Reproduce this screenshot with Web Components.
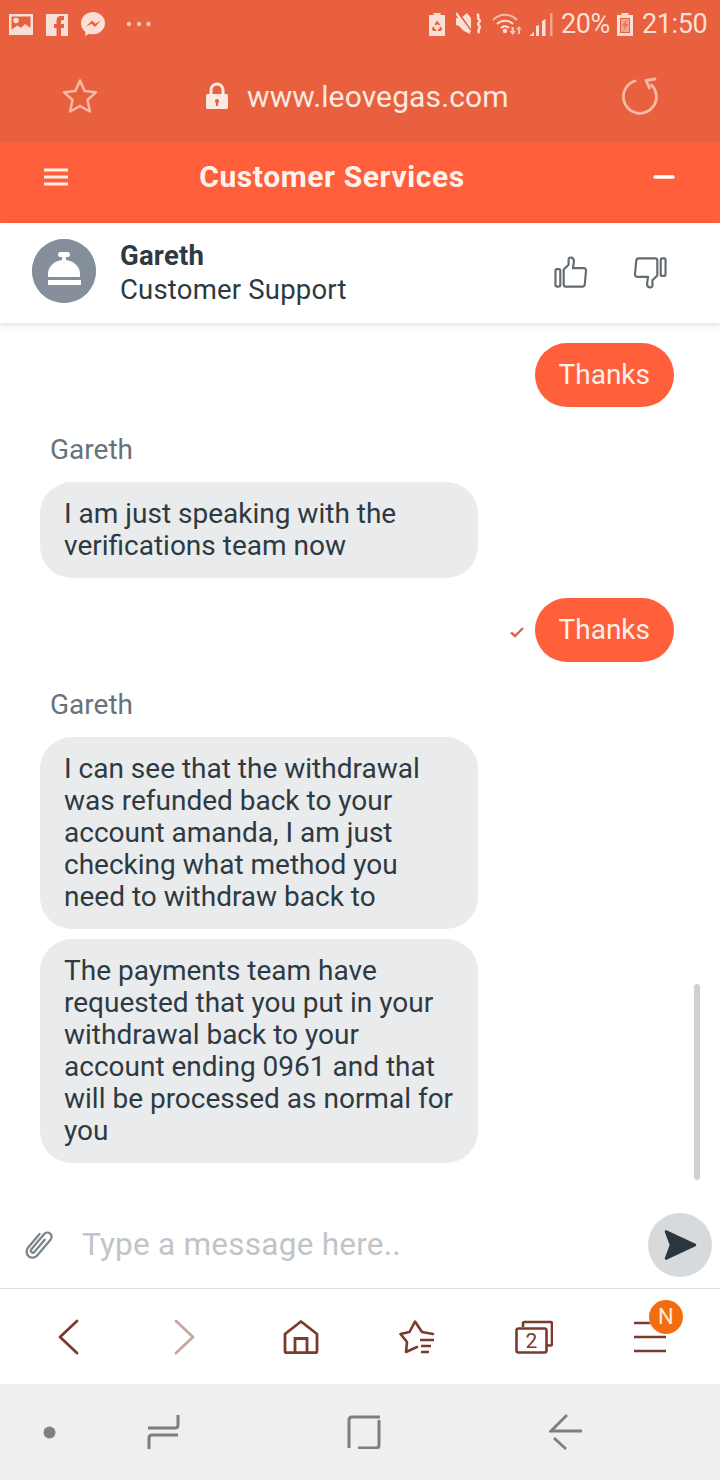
<!DOCTYPE html>
<html><head><meta charset="utf-8">
<style>
html,body{margin:0;padding:0;background:#fff}
body{width:720px;height:1480px;overflow:hidden;font-family:Roboto,sans-serif;display:flex;flex-direction:column}
</style></head><body>
<x-phone-top></x-phone-top>
<x-app-header title="Customer Services"></x-app-header>
<x-agent-bar name="Gareth" role="Customer Support"></x-agent-bar>
<x-chat>
  <x-bubble kind="out" style="margin-top:20px">Thanks</x-bubble>
  <x-sender style="margin-top:27px">Gareth</x-sender>
  <x-bubble kind="in" style="margin-top:16px">I am just speaking with the<br>verifications team now</x-bubble>
  <x-bubble kind="out" check style="margin-top:20px">Thanks</x-bubble>
  <x-sender style="margin-top:27px">Gareth</x-sender>
  <x-bubble kind="in" style="margin-top:16px">I can see that the withdrawal<br>was refunded back to your<br>account amanda, I am just<br>checking what method you<br>need to withdraw back to</x-bubble>
  <x-bubble kind="in" style="margin-top:10px">The payments team have<br>requested that you put in your<br>withdrawal back to your<br>account ending 0961 and that<br>will be processed as normal for<br>you</x-bubble>
</x-chat>
<x-composer placeholder="Type a message here.."></x-composer>
<x-browser-nav></x-browser-nav>
<x-system-nav></x-system-nav>
<script>
function def(name, css, html){
  customElements.define(name, class extends HTMLElement{
    constructor(){super();this.attachShadow({mode:'open'});}
    connectedCallback(){
      const t=typeof html==='function'?html(this):html;
      this.shadowRoot.innerHTML='<style>'+css+'</style>'+t;
    }
  });
}
const S='#FADFD6';
def('x-phone-top',`
:host{display:block;background:#E8603D;height:143px;flex:none;color:${S};font-family:Roboto,sans-serif}
.status{height:48px;display:flex;align-items:center;padding:0 12px 0 9px;box-sizing:border-box}
svg{display:block;flex:none}
.t{font-size:27px;line-height:48px;letter-spacing:-.4px;display:block;white-space:nowrap}
.url{height:95px;display:flex;align-items:center;padding-left:62px;box-sizing:border-box}
.addr{font-size:30px;color:#FCE9E3;margin-left:18px;margin-top:2px;white-space:nowrap;line-height:93px;letter-spacing:.12px}
`,`
<div class="status">
<svg width="24" height="23" viewBox="0 0 24 23"><path fill="${S}" fill-rule="evenodd" d="M0 1h24v21H0zM2.500 3.500v13l6-4 3.500 2.500 4-4 5.500 4v-11.500z"/><circle cx="7" cy="7.500" r="2.800" fill="${S}"/></svg>
<svg style="margin-left:13px" width="22" height="23" viewBox="0 0 22 23"><path fill="${S}" fill-rule="evenodd" d="M0 1h22v22h-7v-8h3v-4h-3V8.500c0-1 .5-1.500 1.500-1.500H18V3h-3c-3 0-4.500 2-4.500 4.500V11H8v4h2.500v8H0z"/></svg>
<svg style="margin-left:13px" width="24" height="25" viewBox="0 0 24 25"><path fill="${S}" fill-rule="evenodd" d="M12 0C5.300 0 0 5 0 11.300c0 3.500 1.600 6.500 4.300 8.500V24l4-2.200c1.200.4 2.400.5 3.700.5 6.700 0 12-5 12-11S18.700 0 12 0zM5 14.800l6-6.200 3.300 3.200 5.700-3.200-6 6.300-3.300-3.200z"/></svg>
<svg style="margin-left:21px" width="25" height="6" viewBox="0 0 25 6"><g fill="${S}" opacity=".8"><circle cx="3" cy="3" r="2.200"/><circle cx="13" cy="3" r="2.200"/><circle cx="22.500" cy="3" r="2.200"/></g></svg>
<svg style="margin-left:278px" width="16" height="23" viewBox="0 0 16 23"><path fill="${S}" fill-rule="evenodd" d="M4.500 0h7v2H16v21H0V2h4.500zM8 7.500l-2.500 4 2 1 1-1.800 1 1.800 1.800-1zM4 13.500 2.800 16l1.300 2h3v-2H5l.7-1.500zM12 13.500l-1.800 1 .8 1.500H9v2h3l1.200-2z"/></svg>
<svg style="margin-left:11px" width="26" height="24" viewBox="0 0 26 24"><path fill="${S}" d="M0 6h5l6-5 4 5v12l-1 4-6-3-5-5-3-1z"/><path d="M2 1l15 21" stroke="#E8603D" stroke-width="2.600"/><path d="M3 0l14 19" stroke="${S}" stroke-width="2.400" transform="translate(-3 1)"/><path d="M21 2c3.500 2-1 3 2 5.500S20 11 23 13.500 20 18 23.500 21" fill="none" stroke="${S}" stroke-width="2.400"/></svg>
<svg style="margin-left:10px" width="30" height="24" viewBox="0 0 30 24"><g fill="none" stroke="${S}" stroke-width="2" opacity=".7"><path d="M1 8c7-7 17-7 24 0"/></g><g fill="none" stroke="${S}" stroke-width="2"><path d="M5 12c4.500-4.500 11.500-4.500 16 0"/><path d="M9 16c2.500-2.500 5.500-2.500 8 0"/></g><circle cx="13" cy="19" r="2.200" fill="${S}"/><path d="M19.500 15h2.500v4h2l-3.300 4-3.300-4h2.100z" fill="${S}" opacity=".8"/><path d="M27 14l3 3.500h-2V22h-2v-4.500h-2z" fill="${S}" opacity=".75"/></svg>
<svg style="margin-left:7px" width="25" height="24" viewBox="0 0 25 24"><path fill="${S}" d="M0 24l5-4v4zM7 24V14l3-1v11zM13 24V9l3.500-2v17z"/><path fill="${S}" opacity=".55" d="M21 1h2.500v23H21z"/></svg>
<span class="t" style="margin-left:7px;width:48px">20%</span>
<svg style="margin-left:8px" width="16" height="23" viewBox="0 0 16 23"><path fill="${S}" fill-rule="evenodd" d="M4.500 0h7v2H16v21H0V2h4.500zM3 5v15h10V5z"/><path fill="${S}" d="M4 6h8v13H4z" opacity=".55"/><path fill="#E8603D" d="M10 6l-5 7h3l-1.500 5 5-7H8.500z" opacity=".7"/></svg>
<span class="t" style="margin-left:9px">21:50</span>
</div>
<div class="url">
<svg width="36" height="36" viewBox="0 0 36 36"><path d="M18 2.500l4.700 10.600 11.300 1.200-8.500 7.700 2.500 11.500L18 28l-10 5.500 2.500-11.500L2 14.300l11.300-1.200z" fill="none" stroke="#F7B9A6" stroke-width="2.500" stroke-linejoin="round"/></svg>
<svg style="margin-left:107px" width="24" height="28" viewBox="0 0 24 28"><path fill="none" stroke="#FCE9E3" stroke-width="3" d="M6 13V8a6 6 0 0 1 12 0v5"/><path fill="#FCE9E3" fill-rule="evenodd" d="M2.500 12h19a1.500 1.500 0 0 1 1.500 1.500v12a1.500 1.500 0 0 1-1.500 1.500h-19A1.500 1.500 0 0 1 1 25.500v-12A1.500 1.500 0 0 1 2.500 12zM12 17a2.200 2.200 0 0 0-1 4.100V24h2v-2.900A2.200 2.200 0 0 0 12 17z"/></svg>
<span class="addr">www.leovegas.com</span>
<svg style="margin-left:111px;margin-top:2px" width="40" height="40" viewBox="0 0 40 40"><path d="M15 4A16.500 16.500 0 1 0 31.500 8" fill="none" stroke="#F7B9A6" stroke-width="2.800" stroke-linecap="round"/><path d="M35 2 26 3.500 29.500 11" fill="none" stroke="#F7B9A6" stroke-width="2.800" stroke-linecap="round" stroke-linejoin="round"/></svg>
</div>`);

def('x-app-header',`
:host{display:flex;align-items:center;height:80px;flex:none;background:#FF5F3B;color:#FFF3EE;box-sizing:border-box;padding:0 45px 12px 44px;position:relative;z-index:1}
h1{flex:1;margin:0;padding-right:57px;text-align:center;font:700 30px/1 Roboto,sans-serif;letter-spacing:.6px;white-space:nowrap}
svg{display:block;flex:none}
`,h=>`
<svg width="24" height="18" viewBox="0 0 24 18"><path d="M0 2h24M0 9h24M0 16h24" stroke="#FFEDE6" stroke-width="3"/></svg>
<h1>${h.getAttribute('title')}</h1>
<svg width="22" height="4" viewBox="0 0 22 4"><path d="M2 2h18" stroke="#fff" stroke-width="3.500" stroke-linecap="round"/></svg>`);

def('x-agent-bar',`
:host{display:flex;align-items:center;height:100px;flex:none;background:#fff;box-sizing:border-box;padding:0 0 0 32px;box-shadow:0 2px 6px rgba(0,0,0,.13);position:relative;z-index:1;font-family:Roboto,sans-serif;color:#2E3A42}
.av{width:64px;height:64px;border-radius:50%;background:#848F9B;display:block;flex:none;margin-bottom:4px}
.txt{margin-left:24px;flex:1;font-size:27.500px;line-height:34px}
b{display:block;font-weight:700;letter-spacing:.2px}
span{display:block;white-space:nowrap;letter-spacing:.2px}
.th{flex:none;display:block;margin-bottom:2px}
`,h=>`
<svg class="av" viewBox="0 0 64 64"><circle cx="32" cy="32" r="32" fill="#848F9B"/><path fill="#fff" d="M16 35a16 14 0 0 1 32 0v3H16z"/><rect x="26" y="13" width="12" height="5" rx="2.500" fill="#fff"/><rect x="30" y="16" width="4" height="6" fill="#fff"/><rect x="16" y="41" width="33" height="5" fill="#fff"/></svg>
<div class="txt"><b>${h.getAttribute('name')}</b><span>${h.getAttribute('role')}</span></div>
<svg class="th" style="margin-right:47px" width="33" height="33" viewBox="0 0 34 34"><g fill="none" stroke="#636B70" stroke-width="2.200" stroke-linejoin="round"><rect x="1.500" y="13.500" width="5" height="18" rx="1.500"/><path d="M10 14l5-5V3.500c0-3 5.500-2.500 5.500 1.500 0 3-1 6-1 7.500h11.200c1.800 0 2.300 1 2.300 2.500l-1.300 14c-.2 1.500-1 2.500-2.500 2.500H12c-1.500 0-2-1-2-2.500z"/></g></svg>
<svg class="th" style="margin-right:53px" width="33" height="33" viewBox="0 0 34 34"><g fill="none" stroke="#636B70" stroke-width="2.200" stroke-linejoin="round" transform="rotate(180 17 17)"><rect x="1.500" y="13.500" width="5" height="18" rx="1.500"/><path d="M10 14l5-5V3.500c0-3 5.500-2.500 5.500 1.500 0 3-1 6-1 7.500h11.200c1.800 0 2.300 1 2.300 2.500l-1.300 14c-.2 1.500-1 2.500-2.500 2.500H12c-1.500 0-2-1-2-2.500z"/></g></svg>`);

def('x-chat',`
:host{display:block;height:877px;flex:none;position:relative;box-sizing:border-box;padding:0 46px 0 40px;background:#fff;overflow:hidden}
.bar{position:absolute;left:694px;top:661px;width:6px;height:196px;border-radius:3px;background:#CDD1D4}
`,`<slot></slot><div class="bar"></div>`);

def('x-sender',`
:host{display:block;font:28px/32px Roboto,sans-serif;color:#66737B;padding-left:10px}
`,`<slot></slot>`);

def('x-bubble',`
:host{display:flex;align-items:center;font:28px/32px Roboto,sans-serif}
:host([kind=out]){justify-content:flex-end}
.b{box-sizing:border-box}
:host([kind=in]) .b{width:438px;background:#E9EBED;color:#2E3A42;border-radius:32px;padding:16px 10px 16px 24px;white-space:nowrap}
:host([kind=out]) .b{background:#FF5F3B;color:#FFEFE9;height:64px;border-radius:32px;padding:16px 24px;white-space:nowrap}
svg{display:block;margin-right:10px;margin-top:4px}
`,h=>`${h.hasAttribute('check')?'<svg width="16" height="12" viewBox="0 0 16 12"><path d="M2 6.500l4 3.500 8-8" fill="none" stroke="#D9694B" stroke-width="2.400"/></svg>':''}<div class="b"><slot></slot></div>`);

def('x-composer',`
:host{display:flex;align-items:center;height:89px;flex:none;box-sizing:border-box;padding:0 8px 0 24px;background:#fff;border-bottom:1px solid #DEDFE0;font-family:Roboto,sans-serif}
.i{display:block;flex:none}
.p{flex:1;margin-left:28px;font-size:31.500px;color:#BFC5C9;white-space:nowrap;letter-spacing:.25px}
.send{width:64px;height:64px;border-radius:50%;background:#D7DADD;display:flex;align-items:center;justify-content:center;flex:none;margin-top:2px}
`,h=>`
<svg class="i" width="30" height="34" viewBox="0 0 30 34"><path transform="rotate(40 15 17)" d="M9 9v18a6 6 0 0 0 12 0V6a4.200 4.200 0 0 0-8.400 0v20a2 2 0 0 0 4 0V10" fill="none" stroke="#7A868E" stroke-width="2.300" stroke-linecap="round" stroke-linejoin="round"/></svg>
<span class="p">${h.getAttribute('placeholder')}</span>
<div class="send"><svg style="margin-left:-1px" width="34" height="32" viewBox="0 0 34 32"><path fill="#2A3640" stroke="#2A3640" stroke-width="2.500" stroke-linejoin="round" d="M3 2.500 32 16 3 29.500 8 16z"/></svg></div>`);

const B='#7C3A2C';
def('x-browser-nav',`
:host{display:flex;align-items:center;height:95px;flex:none;background:#fff;box-sizing:border-box;padding:0 0 0 10px;font-family:Roboto,sans-serif}
.c{width:116.400px;height:95px;display:flex;align-items:center;justify-content:center;position:relative;flex:none}
.n{position:absolute;left:57px;top:11px;width:34px;height:34px;border-radius:50%;background:#F26D10;color:#FDE9DA;font-size:22px;line-height:34px;text-align:center;box-shadow:0 0 0 1px #fff3}
svg{display:block}
text{font-family:Roboto,sans-serif}
`,`
<div class="c"><svg width="22" height="36" viewBox="0 0 22 36"><path d="M20 2 3 18l17 16" fill="none" stroke="${B}" stroke-width="2.800" stroke-linecap="round" stroke-linejoin="round"/></svg></div>
<div class="c"><svg width="22" height="36" viewBox="0 0 22 36"><path d="M2 2l17 16L2 34" fill="none" stroke="#C6A79F" stroke-width="2.800" stroke-linecap="round" stroke-linejoin="round"/></svg></div>
<div class="c"><svg width="36" height="36" viewBox="0 0 36 36"><path d="M18 2.500 34 15v17c0 1-.5 1.700-1.700 1.700H3.700C2.500 33.700 2 33 2 32V15z" fill="none" stroke="${B}" stroke-width="2.800" stroke-linejoin="round"/><path d="M12 33V19.500h12V33" fill="none" stroke="${B}" stroke-width="2.800"/></svg></div>
<div class="c"><svg width="36" height="34" viewBox="0 0 36 34"><path d="M34 14 23 12 16 1.500 10.500 12 1.500 14 8 22 7 32 18 27" fill="none" stroke="${B}" stroke-width="2.600" stroke-linejoin="round" stroke-linecap="round"/><path d="M21 20H35M22 26H32M22 32H30" stroke="${B}" stroke-width="2.600"/></svg></div>
<div class="c"><svg width="38" height="34" viewBox="0 0 38 34"><path d="M8 7V3.500C8 2.500 8.700 2 9.500 2h26c.9 0 1.500.7 1.500 1.500V24c0 .8-.6 1.500-1.500 1.500H32" fill="none" stroke="${B}" stroke-width="2.600"/><rect x="1.500" y="8.500" width="30" height="24" rx="2" fill="none" stroke="${B}" stroke-width="2.600"/><text x="16.500" y="28" text-anchor="middle" font-size="21" fill="${B}">2</text></svg></div>
<div class="c"><svg width="34" height="32" viewBox="0 0 34 32"><path d="M1 2h32M1 16h32M1 30h32" stroke="${B}" stroke-width="2.600"/></svg><span class="n">N</span></div>`);

def('x-system-nav',`
:host{display:flex;align-items:center;height:96px;flex:none;background:#EFEFEF;position:relative}
svg{display:block;flex:none}
`,`
<svg style="margin-left:43px" width="13" height="13" viewBox="0 0 13 13"><circle cx="6.500" cy="6.500" r="6" fill="#808080"/></svg>
<svg style="margin-left:90px" width="34" height="36" viewBox="0 0 34 36"><path d="M32 1v10c0 2-1 3-3 3H2M32 21H6c-2 0-3 1-3 3v11" fill="none" stroke="#7E7E7E" stroke-width="3"/></svg>
<svg style="margin-left:167px" width="34" height="34" viewBox="0 0 34 34"><path d="M2 33V5c0-2 1-3 3-3h28M32 5v25c0 2-1 3-3 3H11" fill="none" stroke="#7E7E7E" stroke-width="3"/></svg>
<svg style="margin-left:168px" width="34" height="36" viewBox="0 0 34 36"><path d="M18 1 2 17h31M5 24l12 11" fill="none" stroke="#7E7E7E" stroke-width="2.800"/></svg>`);
</script>
</body></html>
